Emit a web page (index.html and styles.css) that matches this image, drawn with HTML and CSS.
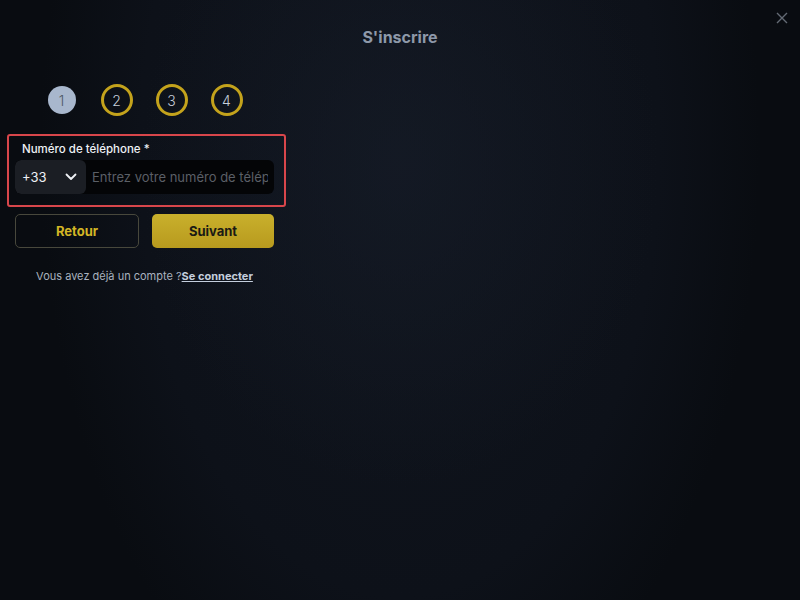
FILE: index.html
```html
<!DOCTYPE html>
<html lang="fr">
<head>
    <meta charset="UTF-8">
    <meta name="viewport" content="width=device-width, initial-scale=1.0">
    <title>S'inscrire</title>
    <link rel="stylesheet" href="styles.css">
</head>
<body>
    <!-- En-tête -->
    <div class="modal-header">
        <h1 class="modal-title">S'inscrire</h1>
        <button class="close-btn" aria-label="Fermer">
            <svg width="12" height="12" viewBox="0 0 12 12">
                <path d="M1 1L11 11M11 1L1 11" stroke="currentColor" stroke-width="1.4" fill="none"/>
            </svg>
        </button>
    </div>

    <div class="form-column">
        <!-- Étapes -->
        <div class="steps">
            <span class="step active">1</span>
            <span class="step">2</span>
            <span class="step">3</span>
            <span class="step">4</span>
        </div>

        <!-- Téléphone -->
        <div class="field-highlight">
            <label class="field-label">Numéro de téléphone *</label>
            <div class="phone-row">
                <div class="country-select">
                    <span>+33</span>
                    <svg width="12" height="8" viewBox="0 0 12 8">
                        <path d="M1.5 1.5L6 6L10.5 1.5" stroke="currentColor" stroke-width="1.8" fill="none" stroke-linecap="round" stroke-linejoin="round"/>
                    </svg>
                </div>
                <input class="phone-input" type="text" placeholder="Entrez votre numéro de téléphone">
            </div>
        </div>

        <div class="actions">
            <button class="btn btn-back">Retour</button>
            <button class="btn btn-next">Suivant</button>
        </div>

        <p class="login-hint">Vous avez déjà un compte ?<a href="#">Se connecter</a></p>
    </div>
</body>
</html>
```

FILE: styles.css
```css
html, body {
    height: 100%;
}

body {
    margin: 0;
    font-family: Inter, "Noto Sans", sans-serif;
    color: #c9d1dc;
    background-color: #090c11;
    background-image:
        radial-gradient(ellipse 260px 320px at 50% 28%, rgba(22, 28, 40, 0.6), rgba(22, 28, 40, 0) 100%),
        radial-gradient(ellipse 360px 620px at 50% 25%, #10151e 0%, #0d1119 72%, rgba(9, 12, 17, 0) 100%);
}

.modal-header {
    position: relative;
    padding-top: 28px;
    text-align: center;
}

.modal-title {
    margin: 0;
    font-size: 16px;
    line-height: 18px;
    font-weight: 700;
    color: #8e99a9;
}

.close-btn {
    position: absolute;
    top: 12px;
    right: 12px;
    padding: 0;
    border: none;
    background: none;
    color: #646b75;
    cursor: pointer;
}

.form-column {
    width: 259px;
    margin-left: 15px;
}

/* Étapes */
.steps {
    display: flex;
    justify-content: center;
    align-items: center;
    gap: 23px;
    margin-top: 38px;
    margin-left: -1px;
}

.step {
    box-sizing: border-box;
    width: 32px;
    height: 32px;
    border: 3px solid #c4a31c;
    border-radius: 50%;
    display: flex;
    align-items: center;
    justify-content: center;
    font-size: 14px;
    font-weight: 300;
    color: #c6cfdb;
}

.step.active {
    width: 28px;
    height: 28px;
    margin: 0 2px;
    border: none;
    background-color: #a8b7cd;
    color: #4e5866;
}

/* Champ téléphone */
.field-highlight {
    margin: 18px -12px 0 -8px;
    padding: 6px 10px 11px 6px;
    border: 2px solid #d8464b;
    border-radius: 3px;
}

.field-label {
    display: block;
    padding-left: 7px;
    font-size: 11.5px;
    font-weight: 500;
    color: #eef1f5;
    margin-bottom: 4px;
}

.phone-row {
    display: flex;
    height: 34px;
    border-radius: 6px;
    overflow: hidden;
    background-color: #040507;
}

.country-select {
    width: 71px;
    display: flex;
    align-items: center;
    justify-content: space-between;
    padding: 0 9px 0 7px;
    box-sizing: border-box;
    background-color: #1b1e24;
    border-radius: 6px;
    color: #eef1f5;
    font-size: 13px;
}

.phone-input {
    flex: 1;
    min-width: 0;
    border: none;
    outline: none;
    background: transparent;
    padding: 0 6px;
    font-family: inherit;
    font-size: 13px;
    color: #eef1f5;
}

.phone-input::placeholder {
    color: #5b5f66;
}

/* Boutons */
.actions {
    display: flex;
    gap: 13px;
    margin-top: 7px;
}

.btn {
    flex: 1;
    height: 34px;
    border-radius: 5px;
    font-family: inherit;
    font-size: 13px;
    font-weight: 700;
    cursor: pointer;
}

.btn-back {
    background: transparent;
    border: 1px solid #48483c;
    color: #d3b625;
}

.btn-next {
    border: none;
    background: linear-gradient(180deg, #c9b02c 0%, #b89a1e 100%);
    color: #1a1a14;
}

.login-hint {
    margin: 21px 0 0;
    text-align: center;
    font-size: 11px;
    color: #a9b2bf;
}

.login-hint a {
    color: #c4cedd;
    font-weight: 700;
    text-decoration: underline;
}
```
